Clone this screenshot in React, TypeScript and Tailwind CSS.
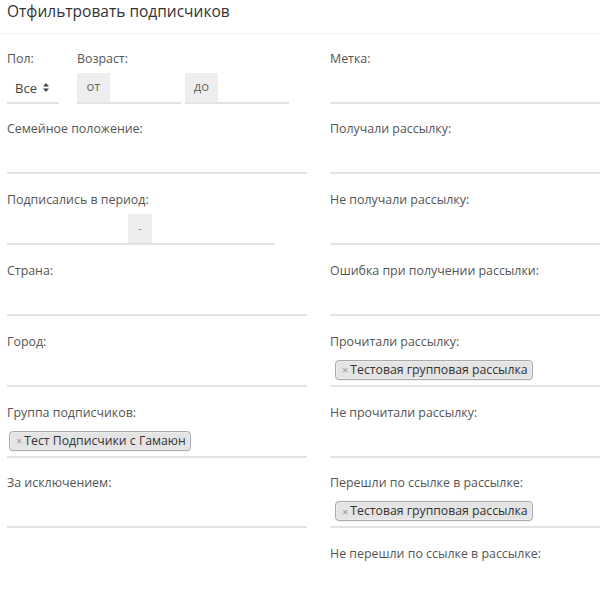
import React from "react";

function Field({
  label,
  children,
  width,
}: {
  label: string;
  children?: React.ReactNode;
  width?: string;
}) {
  return (
    <div className={`mb-[16.83px] ${width ?? ""}`}>
      <div className="text-[12.4px] leading-[17px] text-[#555] whitespace-nowrap">{label}</div>
      <div className="h-[37px] border-b-2 border-[#e3e3e3] flex items-end">{children}</div>
    </div>
  );
}

function Tag({ text, ml }: { text: string; ml: string }) {
  return (
    <div
      className={`${ml} mb-[5px] h-[20px] flex items-center pl-[6px] pr-[4px] bg-[#e4e4e4] border border-[#aaaaaa] rounded-[4px] shadow-[0_0_2px_#fff_inset,0_1px_0_rgba(0,0,0,0.05)] whitespace-nowrap`}
    >
      <span className="text-[11px] text-[#999] mr-[2px] leading-none">×</span>
      <span className="text-[12.25px] text-[#333] leading-[18px]">{text}</span>
    </div>
  );
}

function SortArrows() {
  return (
    <svg width="6" height="9" viewBox="0 0 6 9" className="ml-[6px]">
      <path d="M3 0 L6 3.5 L0 3.5 Z" fill="#444" />
      <path d="M3 9 L6 5.5 L0 5.5 Z" fill="#444" />
    </svg>
  );
}

function AgeInput({ text }: { text: string }) {
  return (
    <div className="w-[104px] h-[37px] border-b-2 border-[#e3e3e3] flex items-end">
      <div className="w-[33px] h-[29px] bg-[#eeeeee] flex items-center justify-center text-[13px] text-[#666]">
        {text}
      </div>
    </div>
  );
}

export default function App() {
  return (
    <div className="w-[600px] h-[589px] overflow-hidden bg-white font-['Open_Sans','Liberation_Sans',sans-serif]">
      <div className="h-[34px] border-b border-[#f0f0f0] pl-[7px]">
        <div className="text-[15.5px] leading-[22px] text-[#333]">Отфильтровать подписчиков</div>
      </div>
      <div className="pl-[7px] pt-[15.5px] grid grid-cols-[300px_270px] gap-x-[23px]">
        <div className="flex flex-col">
          <div className="flex mb-[16.83px]">
            <div className="w-[52px]">
              <div className="text-[12.4px] leading-[17px] text-[#555]">Пол:</div>
              <div className="h-[37px] border-b-2 border-[#e3e3e3] flex items-end pb-[4px] pl-[8px]">
                <div className="flex items-center h-[20px]">
                  <span className="text-[13px] leading-[20px] text-[#444]">Все</span>
                  <SortArrows />
                </div>
              </div>
            </div>
            <div className="ml-[18px]">
              <div className="text-[12.4px] leading-[17px] text-[#555]">Возраст:</div>
              <div className="flex gap-[4px]">
                <AgeInput text="от" />
                <AgeInput text="до" />
              </div>
            </div>
          </div>
          <Field label="Семейное положение:" />
          <Field label="Подписались в период:" width="w-[268px]">
            <div className="w-[121px]" />
            <div className="w-[24px] h-[29px] bg-[#eeeeee] flex items-center justify-center text-[11px] text-[#888]">
              -
            </div>
          </Field>
          <Field label="Страна:" />
          <Field label="Город:" />
          <Field label="Группа подписчиков:">
            <Tag text="Тест Подписчики с Гамаюн" ml="ml-[2px]" />
          </Field>
          <Field label="За исключением:" />
        </div>
        <div className="flex flex-col">
          <Field label="Метка:" />
          <Field label="Получали рассылку:" />
          <Field label="Не получали рассылку:" />
          <Field label="Ошибка при получении рассылки:" />
          <Field label="Прочитали рассылку:">
            <Tag text="Тестовая групповая рассылка" ml="ml-[5px]" />
          </Field>
          <Field label="Не прочитали рассылку:" />
          <Field label="Перешли по ссылке в рассылке:">
            <Tag text="Тестовая групповая рассылка" ml="ml-[5px]" />
          </Field>
          <div className="text-[12.4px] leading-[17px] text-[#555] whitespace-nowrap">
            Не перешли по ссылке в рассылке:
          </div>
        </div>
      </div>
    </div>
  );
}
